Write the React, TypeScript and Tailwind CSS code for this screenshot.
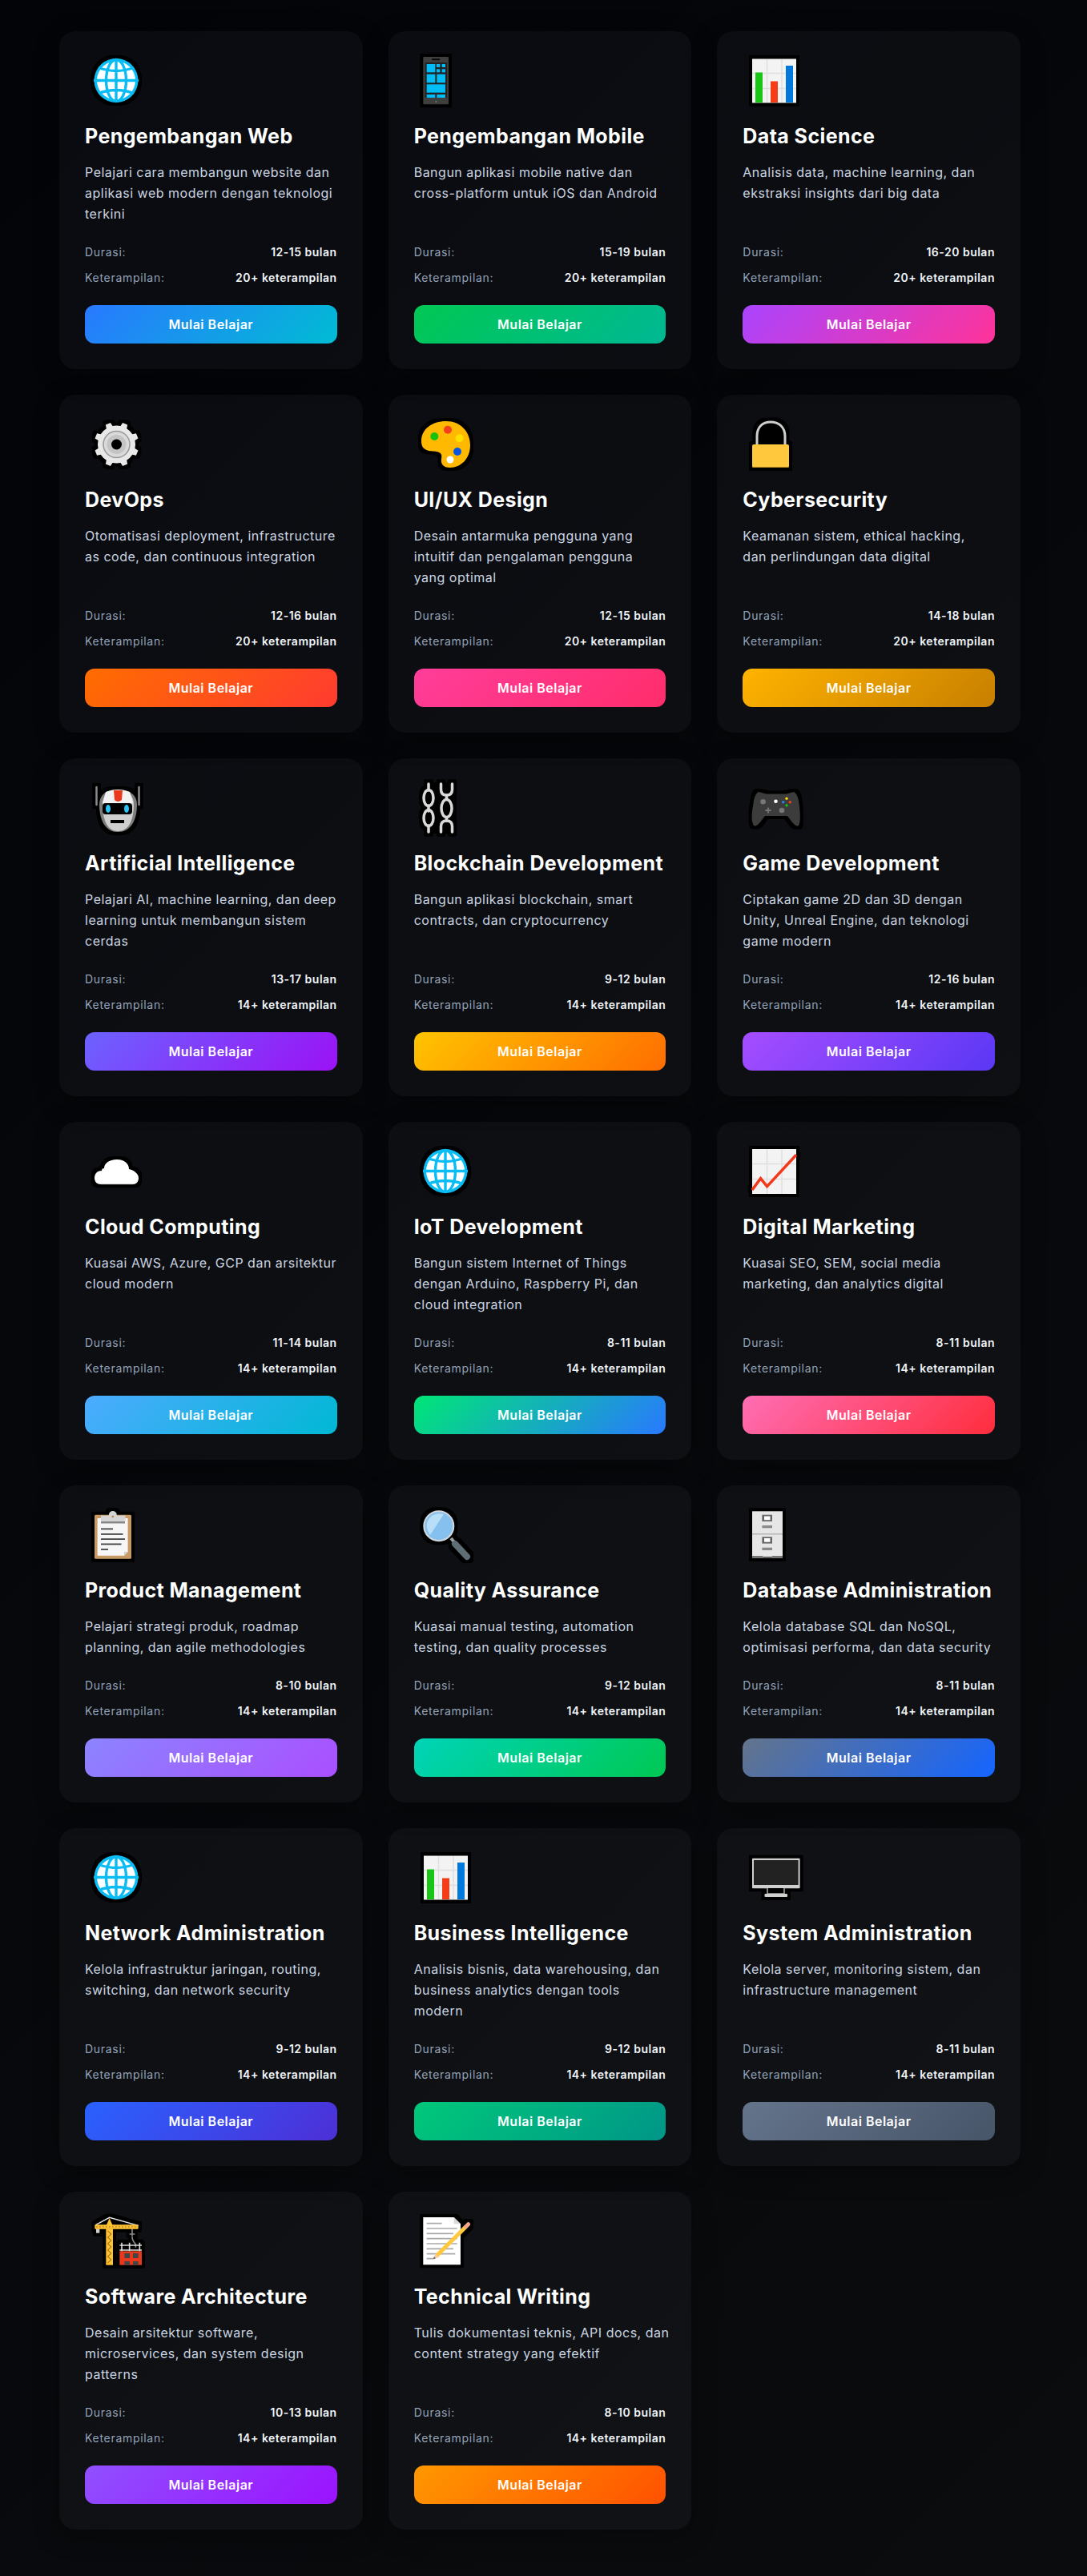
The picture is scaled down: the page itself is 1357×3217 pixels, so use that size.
import React, { useId } from "react";

const Halo = ({ children }: { children: React.ReactNode }) => {
  const id = useId().replace(/[^a-zA-Z0-9]/g, "");
  return (
    <svg width="80" height="81" viewBox="0 4 80 81" className="block overflow-visible">
      <defs>
        <filter id={id} x="-20" y="-20" width="130" height="130" filterUnits="userSpaceOnUse" colorInterpolationFilters="sRGB">
          <feMorphology in="SourceAlpha" operator="dilate" radius="4" result="d" />
          <feGaussianBlur in="d" stdDeviation="0.5" result="b" />
          <feFlood floodColor="#000" />
          <feComposite in2="b" operator="in" result="o" />
          <feMerge>
            <feMergeNode in="o" />
            <feMergeNode in="SourceGraphic" />
          </feMerge>
        </filter>
      </defs>
      <g filter={`url(#${id})`}>{children}</g>
    </svg>
  );
};

const Globe = () => (
  <Halo>
    <circle cx="39" cy="33.5" r="27.5" fill="#0abcf4" />
    <circle cx="39" cy="33.5" r="24" fill="#fff" />
    <g fill="none" stroke="#0abcf4" strokeWidth="3.4">
      <ellipse cx="39" cy="33.5" rx="12.5" ry="26" />
      <path d="M39 7v53M11 33.5h56M17 17.5q22 8 44 0M17 49.5q22-8 44 0" />
    </g>
  </Halo>
);

const Phone = () => (
  <Halo>
    <g transform="translate(-37 -37) scale(.3333)">
      <rect x="145" y="123" width="95" height="178" rx="3" fill="#3f3f3f" />
      <rect x="152" y="144" width="82" height="132" fill="#222" />
      <rect x="177" y="130" width="31" height="6" rx="3" fill="#0a0a0a" />
      <circle cx="193" cy="291" r="3" fill="#777" />
      <g fill="#00bdf7">
        <rect x="158" y="150" width="32" height="31" />
        <rect x="195" y="150" width="13" height="12" />
        <rect x="215" y="150" width="13" height="12" />
        <rect x="195" y="169" width="13" height="12" />
        <rect x="215" y="169" width="13" height="12" />
        <rect x="158" y="188" width="32" height="32" />
        <rect x="196" y="188" width="32" height="32" />
        <rect x="158" y="226" width="70" height="31" />
        <rect x="158" y="264" width="32" height="12" />
        <rect x="196" y="264" width="32" height="12" />
      </g>
    </g>
  </Halo>
);

const ChartBase = ({ children }: { children: React.ReactNode }) => (
  <Halo>
    <rect x="12" y="6" width="55" height="56" fill="#f3f3f3" />
    <path d="M30.5 6v56M49 6v56M12 24.500h55M12 43.500h55" stroke="#dfdfdf" strokeWidth="1.5" />
    {children}
  </Halo>
);

const BarChart = () => (
  <ChartBase>
    <rect x="16" y="23.500" width="9" height="38.500" fill="#1ac615" />
    <rect x="35" y="34.500" width="9" height="27.500" fill="#f53c17" />
    <rect x="54" y="15" width="9" height="47" fill="#0078dc" />
    <path d="M12 6.500h55M12 61.500h55" stroke="#777" strokeWidth="1" />
  </ChartBase>
);

const LineChart = () => (
  <ChartBase>
    <path d="M12 57 22.500 42.700 30.600 52.700 67 13.300" fill="none" stroke="#f4381a" strokeWidth="3.500" />
  </ChartBase>
);

const gearPath = () => {
  const pts: string[] = [];
  const n = 8;
  for (let i = 0; i < n; i++) {
    const a = (i / n) * Math.PI * 2 - Math.PI / 2 + Math.PI / 8;
    const w = Math.PI / n;
    [
      [a - w * 0.95, 23.5],
      [a - w * 0.45, 23.5],
      [a - w * 0.3, 28],
      [a + w * 0.3, 28],
      [a + w * 0.45, 23.5],
      [a + w * 0.95, 23.5],
    ].forEach(([t, r]) => pts.push(`${(39.5 + r * Math.cos(t)).toFixed(2)} ${(34 + r * Math.sin(t)).toFixed(2)}`));
  }
  return "M" + pts.join("L") + "Z";
};

const Gear = () => (
  <Halo>
    <path d={gearPath()} fill="#e8e8e8" />
    <circle cx="39.500" cy="34" r="16.500" fill="#dadada" stroke="#999" strokeWidth="1.500" />
    <circle cx="39.500" cy="34" r="12" fill="#c4c4c4" />
    <circle cx="39.500" cy="34" r="6.500" fill="#000" />
  </Halo>
);

const Palette = () => (
  <Halo>
    <path d="M40 5C58 5 70 18 70 35C70 52 58 63 45 63C36 63 33 58 34 52C35 47 34 44 28 43C20 42 9 43 9 30C9 15 22 5 40 5Z" fill="#ffb900" />
    <ellipse cx="42" cy="15.700" rx="5" ry="5" fill="#f43f1c" />
    <ellipse cx="25.300" cy="24" rx="5" ry="5" fill="#17c20f" />
    <ellipse cx="56.600" cy="26.300" rx="5" ry="5" fill="#ffe100" />
    <ellipse cx="54" cy="43" rx="5" ry="5" fill="#0a55e0" />
    <ellipse cx="45" cy="53" rx="4.500" ry="4.500" fill="#fff" />
  </Halo>
);

const Lock = () => (
  <Halo>
    <path d="M18 36V24C18 12 25 6 35 6C45 6 53 12 53 24V36Z" fill="#000" stroke="#cfcfcf" strokeWidth="3" />
    <rect x="12" y="34" width="46" height="29" rx="2" fill="#ffc83d" />
    <path d="M12.500 62.500h45" stroke="#b88a1e" strokeWidth="1" />
  </Halo>
);

const Robot = () => (
  <Halo>
    <path d="M14.500 8v22M67.500 8v22" stroke="#8a8a8a" strokeWidth="2.500" strokeLinecap="round" />
    <path d="M18 30C18 18 26 11 41 11C56 11 65 18 65 30C65 48 58 64 41 64C25 64 18 48 18 30Z" fill="#7d7d7d" />
    <path d="M22 30C22 18 29 12 41 12C54 12 61 18 61 30C61 50 54 63 41 63C29 63 22 50 22 30Z" fill="#cfcfcf" />
    <path d="M26 14Q41 8 56 14L60 28H22Z" fill="#f2f2f2" />
    <path d="M36 12H47L46 24Q41 28 37 24Z" fill="#e8391c" />
    <rect x="22" y="28" width="37" height="14" rx="4" fill="#000" />
    <ellipse cx="29" cy="35" rx="3" ry="5" fill="#29c5f6" />
    <ellipse cx="52" cy="35" rx="3" ry="5" fill="#29c5f6" />
    <rect x="32" y="49" width="17" height="4" fill="#000" />
  </Halo>
);

const Chain = () => (
  <Halo>
    <rect x="19" y="6" width="30" height="56" fill="#000" />
    <g fill="none" stroke="#d9d9d9" strokeWidth="3.500" strokeLinecap="round">
      <path d="M18 4V12M18 31V38M18 56V64" />
      <ellipse cx="18" cy="21.500" rx="6" ry="10" />
      <ellipse cx="18" cy="46.500" rx="6" ry="10" />
      <path d="M33.500 4V11Q33.500 18 40.500 18Q47.500 18 47.500 11V4" />
      <path d="M40.500 18V23M40.500 46V50" />
      <ellipse cx="40.500" cy="34.500" rx="6.500" ry="11" />
      <path d="M33.500 64V57Q33.500 50 40.500 50Q47.500 50 47.500 57V64" />
    </g>
  </Halo>
);

const Controller = () => (
  <Halo>
    <path d="M20 14L30 16.500H54L64 14C68 16 70 22 71 32C72 42 72.500 52 70 56C66 58 62 52 56 44H28C22 52 18 58 14 56C11 52 11 42 13 32C14 22 16 16 20 14Z" fill="#3c3c3c" />
    <circle cx="25.600" cy="26.300" r="3.300" fill="#777" />
    <circle cx="49" cy="37" r="3.300" fill="#777" />
    <path d="M32 33.500v7M28.500 37h7" stroke="#777" strokeWidth="1.800" />
    <circle cx="41.500" cy="25.700" r="2.300" fill="#fff" />
    <circle cx="55" cy="22.300" r="1.700" fill="#ffd400" />
    <circle cx="59.300" cy="26.700" r="1.700" fill="#f43f1c" />
    <circle cx="50.700" cy="26.700" r="1.700" fill="#2f80ed" />
    <circle cx="55" cy="30.700" r="1.700" fill="#17c20f" />
  </Halo>
);

const Cloud = () => (
  <Halo>
    <path d="M20 50C15 50 12 47 12 42C12 37 15 33 21 33C21 31 22 30 24 30C24 24 30 19 40 19C50 19 55 25 55 31C60 32 67 36 67 42C67 47 64 50 60 50Z" fill="#fff" />
    <path d="M20 49.700H60" stroke="#cfcfcf" strokeWidth="1" />
  </Halo>
);

const Clipboard = () => (
  <Halo>
    <rect x="12" y="8.700" width="46" height="55" rx="1.500" fill="#c79a66" />
    <path d="M15.600 13H53.600V55L49 59.700H15.600Z" fill="#f6f6f6" />
    <path d="M49 59.700V55H53.600Z" fill="#cfcfcf" />
    <rect x="20" y="9.700" width="30.500" height="7.500" fill="#d4d4d4" />
    <ellipse cx="34.800" cy="9" rx="5" ry="5" fill="#d4d4d4" />
    <circle cx="34.800" cy="11" r="1.300" fill="#c77d3e" />
    <rect x="20" y="17" width="30" height="2.500" fill="#888" />
    <g fill="#444">
      <rect x="20" y="25.500" width="15" height="1.800" />
      <rect x="20" y="32" width="27.500" height="1.800" />
      <rect x="20" y="38.200" width="30" height="1.800" />
      <rect x="20" y="44.500" width="25.500" height="1.800" />
      <rect x="20" y="51" width="9" height="1.800" />
    </g>
  </Halo>
);

const Magnifier = () => (
  <Halo>
    <path d="M46 38L51 44" stroke="#9aa3a8" strokeWidth="4" />
    <path d="M51 45L66 61" stroke="#5f6e75" strokeWidth="8" strokeLinecap="round" />
    <circle cx="30.800" cy="22.700" r="18.500" fill="#86c0ee" stroke="#d2d8dd" strokeWidth="2" />
    <path d="M20 34C14 26 14 16 22 10C26 7 32 6.500 37 8Z" fill="#b8def8" />
  </Halo>
);

const Cabinet = () => (
  <Halo>
    <rect x="12" y="4.300" width="38" height="57" fill="#e6e6e6" />
    <rect x="12" y="32" width="38" height="1.500" fill="#b5b5b5" />
    <g fill="#666">
      <rect x="24.400" y="8.700" width="12.600" height="8.300" />
      <rect x="24.400" y="36.300" width="12.600" height="8.300" />
    </g>
    <g fill="#fff">
      <rect x="27" y="10.500" width="7.500" height="4.700" />
      <rect x="27" y="38" width="7.500" height="4.700" />
    </g>
    <g fill="#8a8a8a">
      <rect x="24.400" y="22" width="12.600" height="3.300" />
      <rect x="24.400" y="49.700" width="12.600" height="3.300" />
    </g>
    <path d="M12 60H25L26 62H36L37 60H50V63H12Z" fill="#777" />
  </Halo>
);

const Monitor = () => (
  <Halo>
    <rect x="12" y="9.700" width="59.600" height="37.600" rx="1" fill="#cfcfcf" />
    <rect x="14" y="12" width="55.600" height="31" fill="#222" />
    <path d="M31 47V54H52V47" fill="#000" stroke="#aaa" strokeWidth="1.500" />
    <rect x="27.500" y="54" width="28.500" height="4" rx="1" fill="#cfcfcf" />
  </Halo>
);

const Crane = () => (
  <Halo>
    <g transform="translate(-26 -15) scale(.3333)">
      <path d="M118 86L170 58L278 88" fill="none" stroke="#e8e8e8" strokeWidth="4" />
      <path d="M255 100V128M245 120H265M255 130Q255 145 268 158L268 170" fill="none" stroke="#8a8a8a" strokeWidth="5" />
      <rect x="120" y="100" width="13" height="16" fill="#cfcfcf" />
      <path d="M158 88L170 60L182 88Z" fill="#ffc233" />
      <rect x="115" y="85" width="163" height="16" rx="3" fill="#ffc233" />
      <path d="M120 93H272" stroke="#7a5a10" strokeWidth="2.500" strokeDasharray="5 7" />
      <rect x="157" y="100" width="26" height="136" fill="#ffc233" />
      <path d="M163 108L177 120L163 132L177 144L163 156L177 168L163 180L177 192L163 204L177 216L163 228" fill="none" stroke="#7a5a10" strokeWidth="3" />
      <rect x="208" y="184" width="83" height="52" fill="#e8391c" />
      <g fill="#444">
        <rect x="226" y="192" width="20" height="18" />
        <rect x="258" y="192" width="20" height="18" />
        <rect x="226" y="222" width="20" height="14" />
        <rect x="258" y="222" width="20" height="14" />
      </g>
      <path d="M208 162H291M208 180H291M216 152V184M245 152V184M283 152V184" stroke="#dcdcdc" strokeWidth="5" />
    </g>
  </Halo>
);

const Memo = () => (
  <Halo>
    <g transform="translate(-437 -15) scale(.3333)">
      <path d="M1345 57H1460L1485 82V235H1345Z" fill="#fff" />
      <path d="M1460 57L1485 82H1460Z" fill="#d9d9d9" />
      <g stroke="#aaa" strokeWidth="5">
        <path d="M1358 80H1415M1358 99H1472M1358 118H1458M1358 137H1472M1358 156H1472M1358 175H1458M1358 194H1465M1358 212H1385" />
      </g>
      <path d="M1395 202L1505 92" stroke="#ffc83d" strokeWidth="15" />
      <path d="M1505 92L1514 83" stroke="#f4a58a" strokeWidth="15" strokeLinecap="round" />
      <path d="M1383 214L1390 193L1404 207Z" fill="#f5cda8" />
      <path d="M1383 214L1386 205L1392 211Z" fill="#555" />
    </g>
  </Halo>
);

const items = [
  { I: Globe, t: "Pengembangan Web", d: "Pelajari cara membangun website dan\naplikasi web modern dengan teknologi\nterkini", u: "12-15 bulan", k: "20+ keterampilan", g: "bg-[linear-gradient(135deg,#2979ff,#00bcd4)]" },
  { I: Phone, t: "Pengembangan Mobile", d: "Bangun aplikasi mobile native dan\ncross-platform untuk iOS dan Android", u: "15-19 bulan", k: "20+ keterampilan", g: "bg-[linear-gradient(135deg,#00c853,#00b894)]" },
  { I: BarChart, t: "Data Science", d: "Analisis data, machine learning, dan\nekstraksi insights dari big data", u: "16-20 bulan", k: "20+ keterampilan", g: "bg-[linear-gradient(135deg,#aa44ff,#ff3399)]" },
  { I: Gear, t: "DevOps", d: "Otomatisasi deployment, infrastructure\nas code, dan continuous integration", u: "12-16 bulan", k: "20+ keterampilan", g: "bg-[linear-gradient(135deg,#ff6d00,#ff3b30)]" },
  { I: Palette, t: "UI/UX Design", d: "Desain antarmuka pengguna yang\nintuitif dan pengalaman pengguna\nyang optimal", u: "12-15 bulan", k: "20+ keterampilan", g: "bg-[linear-gradient(135deg,#ff3d9a,#ff2d6b)]" },
  { I: Lock, t: "Cybersecurity", d: "Keamanan sistem, ethical hacking,\ndan perlindungan data digital", u: "14-18 bulan", k: "20+ keterampilan", g: "bg-[linear-gradient(135deg,#ffb300,#c77f00)]" },
  { I: Robot, t: "Artificial Intelligence", d: "Pelajari AI, machine learning, dan deep\nlearning untuk membangun sistem\ncerdas", u: "13-17 bulan", k: "14+ keterampilan", g: "bg-[linear-gradient(135deg,#6c63ff,#9b12f5)]" },
  { I: Chain, t: "Blockchain Development", d: "Bangun aplikasi blockchain, smart\ncontracts, dan cryptocurrency", u: "9-12 bulan", k: "14+ keterampilan", g: "bg-[linear-gradient(135deg,#ffc400,#ff6d00)]" },
  { I: Controller, t: "Game Development", d: "Ciptakan game 2D dan 3D dengan\nUnity, Unreal Engine, dan teknologi\ngame modern", u: "12-16 bulan", k: "14+ keterampilan", g: "bg-[linear-gradient(135deg,#a64dff,#5a38f5)]" },
  { I: Cloud, t: "Cloud Computing", d: "Kuasai AWS, Azure, GCP dan arsitektur\ncloud modern", u: "11-14 bulan", k: "14+ keterampilan", g: "bg-[linear-gradient(135deg,#4dabff,#00b8d4)]" },
  { I: Globe, t: "IoT Development", d: "Bangun sistem Internet of Things\ndengan Arduino, Raspberry Pi, dan\ncloud integration", u: "8-11 bulan", k: "14+ keterampilan", g: "bg-[linear-gradient(135deg,#00e676,#2979ff)]" },
  { I: LineChart, t: "Digital Marketing", d: "Kuasai SEO, SEM, social media\nmarketing, dan analytics digital", u: "8-11 bulan", k: "14+ keterampilan", g: "bg-[linear-gradient(135deg,#ff6eb4,#ff2d3c)]" },
  { I: Clipboard, t: "Product Management", d: "Pelajari strategi produk, roadmap\nplanning, dan agile methodologies", u: "8-10 bulan", k: "14+ keterampilan", g: "bg-[linear-gradient(135deg,#8c84ff,#aa4fff)]" },
  { I: Magnifier, t: "Quality Assurance", d: "Kuasai manual testing, automation\ntesting, dan quality processes", u: "9-12 bulan", k: "14+ keterampilan", g: "bg-[linear-gradient(135deg,#00d4b8,#00c853)]" },
  { I: Cabinet, t: "Database Administration", d: "Kelola database SQL dan NoSQL,\noptimisasi performa, dan data security", u: "8-11 bulan", k: "14+ keterampilan", g: "bg-[linear-gradient(135deg,#64748b,#1565ff)]" },
  { I: Globe, t: "Network Administration", d: "Kelola infrastruktur jaringan, routing,\nswitching, dan network security", u: "9-12 bulan", k: "14+ keterampilan", g: "bg-[linear-gradient(135deg,#2962ff,#4d2fd6)]" },
  { I: BarChart, t: "Business Intelligence", d: "Analisis bisnis, data warehousing, dan\nbusiness analytics dengan tools\nmodern", u: "9-12 bulan", k: "14+ keterampilan", g: "bg-[linear-gradient(135deg,#00c87a,#009688)]" },
  { I: Monitor, t: "System Administration", d: "Kelola server, monitoring sistem, dan\ninfrastructure management", u: "8-11 bulan", k: "14+ keterampilan", g: "bg-[linear-gradient(135deg,#64748b,#475569)]" },
  { I: Crane, t: "Software Architecture", d: "Desain arsitektur software,\nmicroservices, dan system design\npatterns", u: "10-13 bulan", k: "14+ keterampilan", g: "bg-[linear-gradient(135deg,#9050ff,#9b12ff)]" },
  { I: Memo, t: "Technical Writing", d: "Tulis dokumentasi teknis, API docs, dan\ncontent strategy yang efektif", u: "8-10 bulan", k: "14+ keterampilan", g: "bg-[linear-gradient(135deg,#ff9800,#ff5100)]" },
];

export default function App() {
  return (
    <div className="min-h-[3217px] bg-[linear-gradient(135deg,#030408,#0b0c0e)] pt-[39px] pb-[58px] pl-[74px] font-['Inter',sans-serif]">
      <div className="grid w-[1200px] grid-cols-3 gap-8">
        {items.map(({ I, t, d, u, k, g }) => (
          <div key={t} className="flex flex-col rounded-[20px] bg-[rgba(200,240,255,0.035)] p-8 shadow-[0_8px_32px_rgba(0,0,0,0.3)]">
            <I />
            <h3 className="mb-[14px] whitespace-nowrap text-[25px] leading-[36px] font-bold tracking-[0.4px] text-white">{t}</h3>
            <p className="mb-6 flex-1 whitespace-pre text-[16px] leading-[26px] tracking-[0.5px] text-[#cbd5e1]">{d}</p>
            <div className="mb-[23px] flex flex-col gap-[10px] text-[14px] leading-[22px]">
              <div className="flex justify-between">
                <span className="tracking-[0.7px] text-[#94a3b8]">Durasi:</span>
                <span className="font-semibold tracking-[0.5px] text-[#f1f5f9]">{u}</span>
              </div>
              <div className="flex justify-between">
                <span className="tracking-[0.7px] text-[#94a3b8]">Keterampilan:</span>
                <span className="font-semibold tracking-[0.5px] text-[#f1f5f9]">{k}</span>
              </div>
            </div>
            <button className={`h-12 rounded-xl text-[16px] font-semibold tracking-[0.5px] text-white ${g}`}>Mulai Belajar</button>
          </div>
        ))}
      </div>
    </div>
  );
}
